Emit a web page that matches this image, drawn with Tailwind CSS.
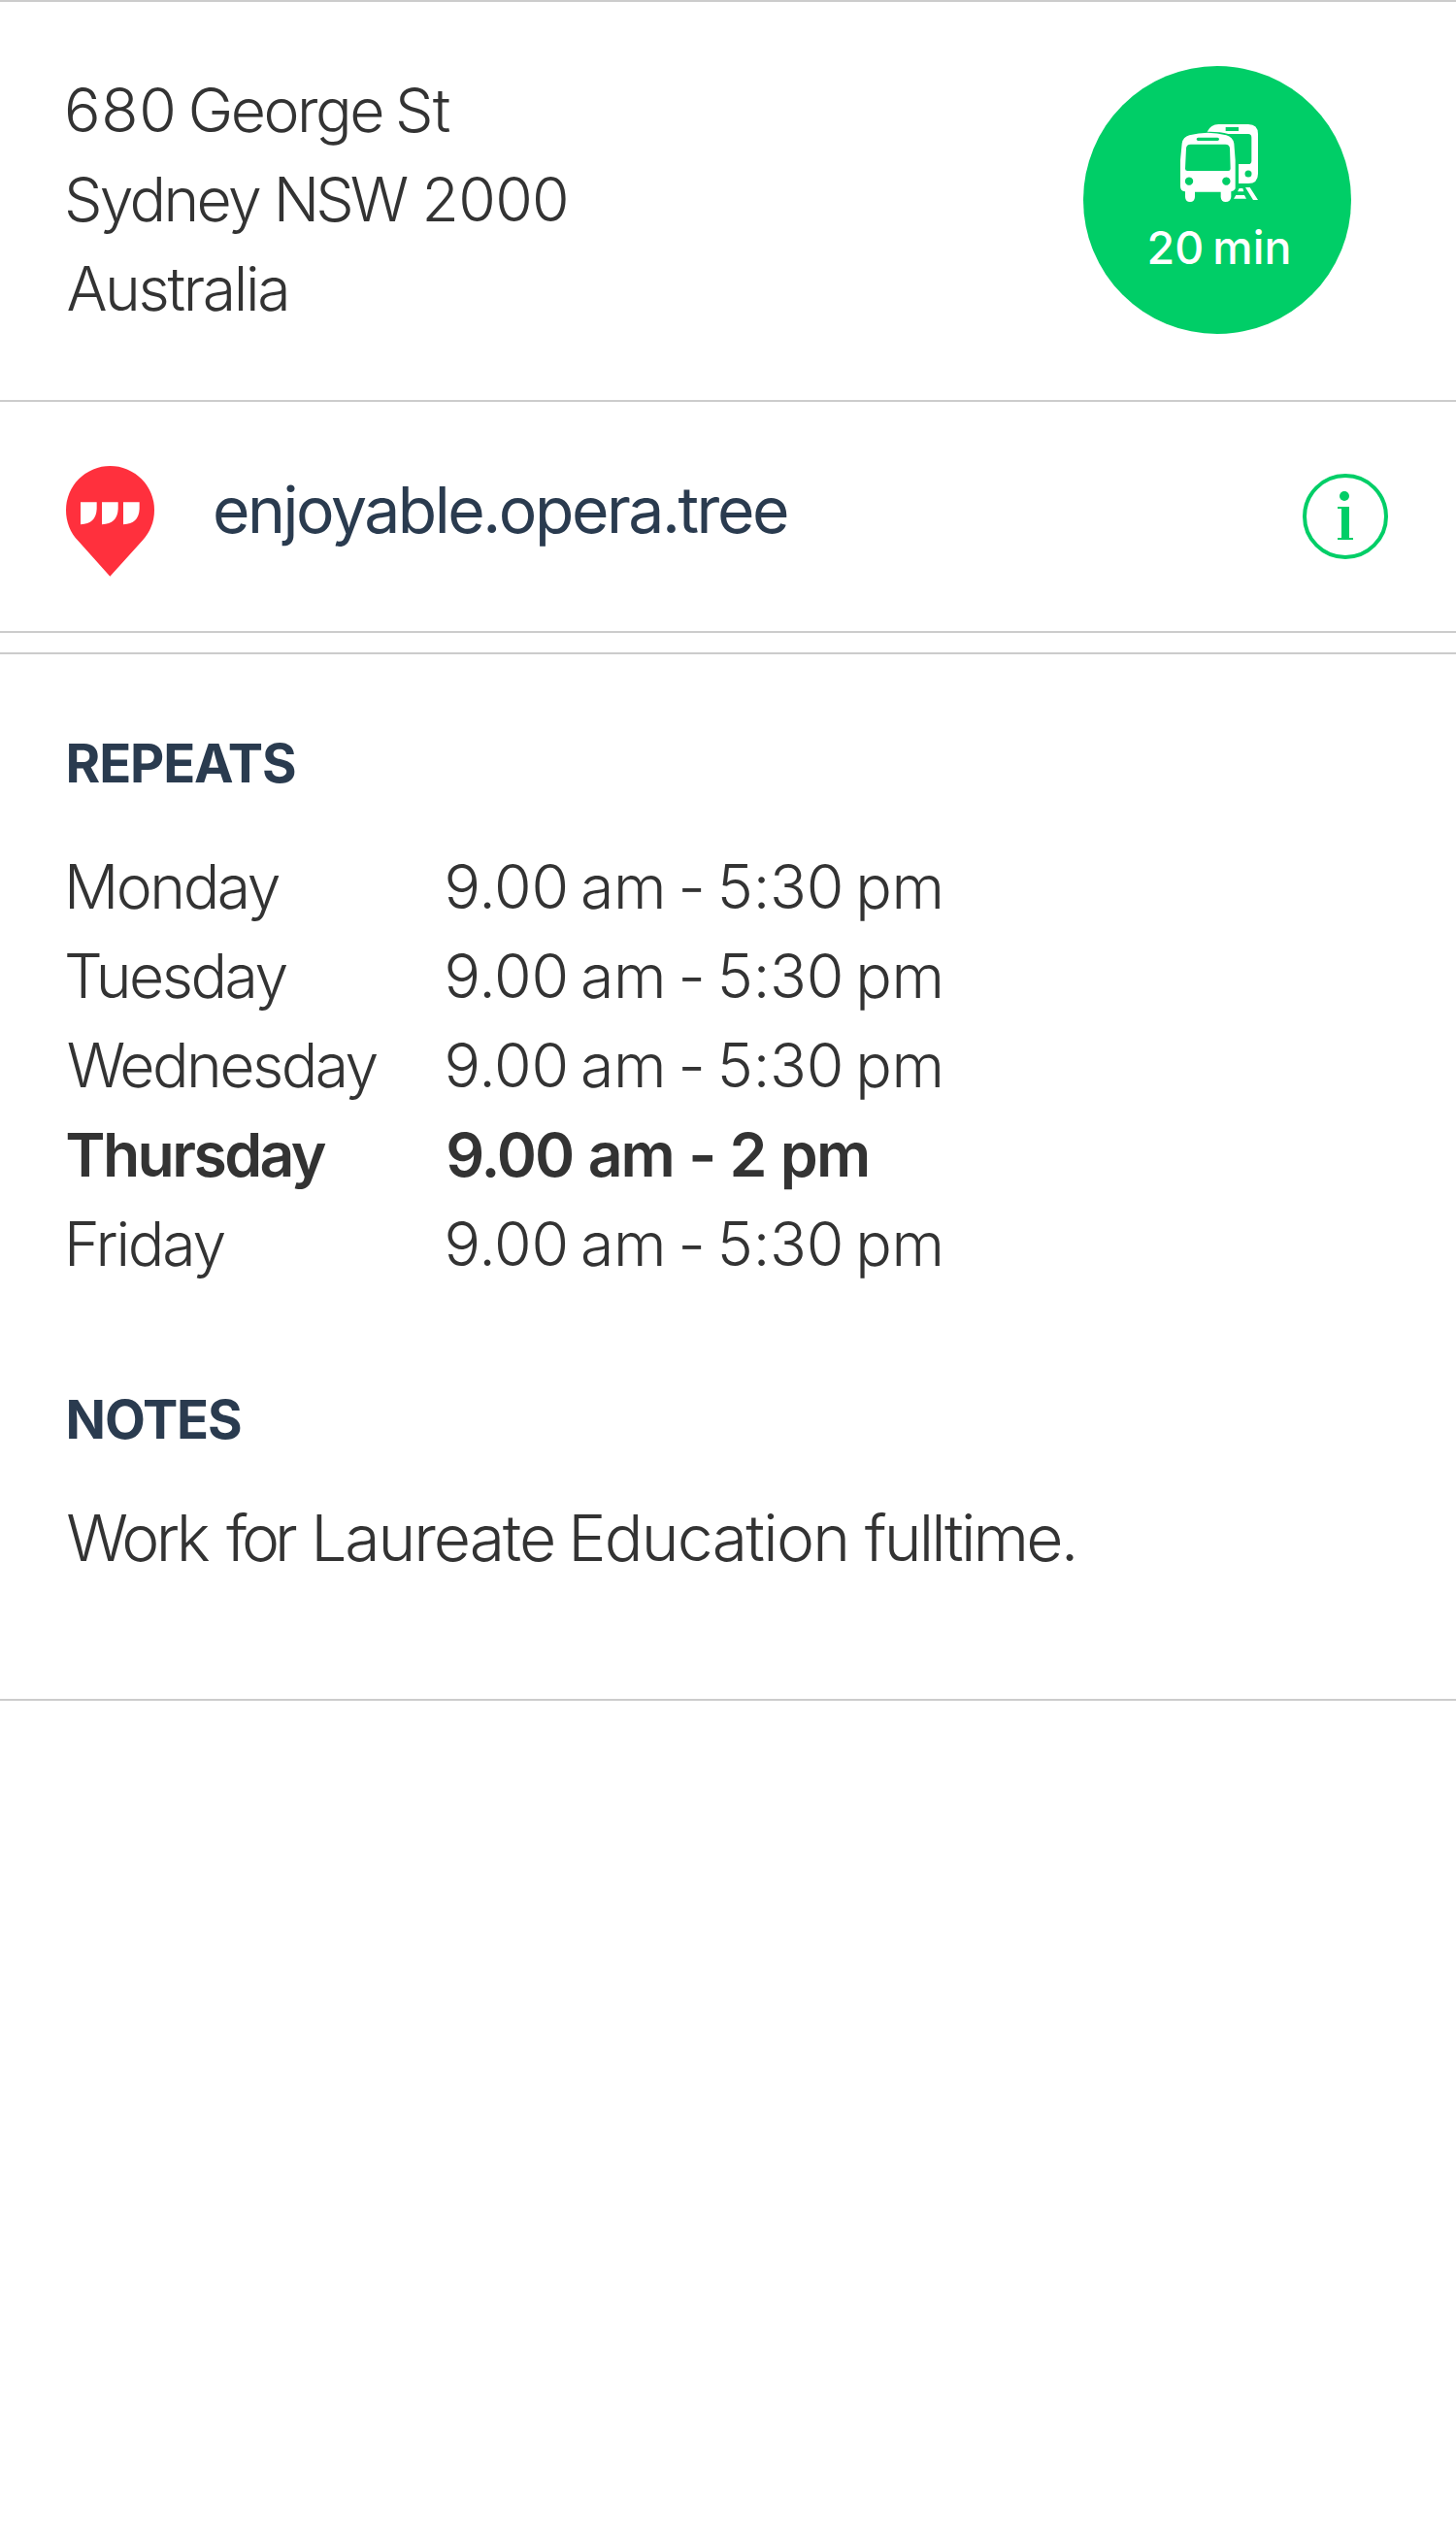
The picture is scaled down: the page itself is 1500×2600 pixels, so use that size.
<!DOCTYPE html>
<html lang="en">
<head>
<meta charset="utf-8">
<title>Place details</title>
<script src="https://cdn.jsdelivr.net/npm/@tailwindcss/browser@4"></script>
</head>
<body class="bg-white font-['Inter',sans-serif] text-[#333] whitespace-nowrap">
<section class="flex h-[412px] items-start justify-between border-t-2 border-[#ccc] pt-[66px] pr-[108px] pl-[66px]">
  <address class="-mt-px text-[62.5px] leading-[92px] font-light not-italic">
    <div class="tracking-[-1.93px] [word-spacing:-2.25px]"><span class="mr-[-2.35px] tracking-[0.72px]">680</span> <span class="mr-[-0.5px] tracking-[-2.43px]">George</span> <span class="tracking-[-0.83px]">St</span></div>
    <div class="tracking-[-2.45px] [word-spacing:-0.43px]"><span class="mr-[0.15px] tracking-[-2.71px]">Sydney</span> <span class="mr-[2.75px] tracking-[-4px]">NSW</span> <span class="tracking-[-0.68px]">2000</span></div>
    <div class="pl-[2.4px] tracking-[-2.36px]">Australia</div>
  </address>
  <div class="flex size-[276px] flex-col items-center rounded-full bg-[#00ce67] pt-[60px] text-white">
    <svg class="ml-1 size-20" viewBox="48 39 240 240" fill="currentColor">
      <path d="M131 62Q142 39 166 39H258Q288 39 288 69V192Q288 222 258 222H228V162H258Q268 162 268 152V80Q268 69 258 69H196Q170 61 131 62Z"/>
      <rect x="188" y="48" width="40" height="12" class="fill-[#00ce67]"/>
      <circle cx="258" cy="192" r="10.5" class="fill-[#00ce67]"/>
      <path fill-rule="evenodd" d="M62 247Q48 245 48 230V150L53 98Q56 79 76 73Q133 58 190 73Q210 79 214 98L218 150V238Q216 244 205 247V264Q203 279 188 279Q174 279 173 264V248H93V264Q92 279 78 279Q64 279 63 264V247ZM80 101Q67 101 66 113L63 176Q63 183 70 183H196Q203 183 203 176L201 113Q200 101 187 101ZM103 80A5 5 0 0 0 103 90H163A5 5 0 0 0 163 80ZM75 202.500A12.500 12.500 0 1 0 75.100 202.500ZM190 202.500A12.500 12.500 0 1 0 190.100 202.500Z"/>
      <path d="M249 234H263L288 273H273ZM230 237H241L244 247H225ZM220 258H246L252 269H213Z"/>
    </svg>
    <span class="mt-[19px] ml-1 text-[46.5px] leading-[56px] font-medium tracking-[0.14px] [word-spacing:-3.65px]">20 min</span>
  </div>
</section>
<section class="flex h-[238px] items-start border-t-2 border-[#ccc] pt-[66px] pr-[70px] pl-[68px]">
  <svg class="h-[114px] w-[91px]" viewBox="54 60 273 341" fill="#ff303d">
    <path d="M190 401L92 291C67 266 54 232 54 196A136.500 136.500 0 0 1 327 196C327 232 314 264 291 289Z"/>
    <path fill="#fff" d="M99 171H149V192Q147 238 99 240ZM165 171H215V192Q213 238 165 240ZM231 171H281V192Q279 238 231 240Z"/>
  </svg>
  <span class="mt-[5px] ml-[60px] text-[66px] leading-[80px] tracking-[-2.46px] text-[#2a3b4f]">enjoyable.opera.tree</span>
  <svg class="mt-2 ml-auto size-[88px]" viewBox="0 0 88 88" fill="#00ce67">
    <circle cx="44" cy="44" r="42" fill="none" stroke="#00ce67" stroke-width="4"/>
    <circle cx="43" cy="23" r="5"/>
    <path d="M36 34H48V66H52V68H36V66H40V36H36Z"/>
  </svg>
</section>
<div class="h-[22px] border-t-2 border-[#ccc]"></div>
<section class="border-y-2 border-[#ccc] pt-[79px] pb-[126px] pl-[66px]">
  <h2 class="pl-[1.6px] text-[54.4px] leading-[66px] font-bold tracking-[-1.13px] text-[#2a3b4f]">REPEATS</h2>
  <dl class="mt-12 grid grid-cols-[391.6px_auto] text-[62.5px] leading-[92px] font-light">
    <dt class="tracking-[-2.48px]">Monday</dt>
    <dd class="tracking-[-0.27px] [word-spacing:-5.07px]">9.00 am <span class="[font-feature-settings:'calt'_0]">-</span> 5:30 pm</dd>
    <dt class="tracking-[-2.49px]">Tuesday</dt>
    <dd class="tracking-[-0.27px] [word-spacing:-5.07px]">9.00 am <span class="[font-feature-settings:'calt'_0]">-</span> 5:30 pm</dd>
    <dt class="pl-[2.7px] tracking-[-2.56px]">Wednesday</dt>
    <dd class="tracking-[-0.27px] [word-spacing:-5.07px]">9.00 am <span class="[font-feature-settings:'calt'_0]">-</span> 5:30 pm</dd>
    <dt class="pl-[1.3px] font-semibold tracking-[-2.61px]">Thursday</dt>
    <dd class="pl-[1.6px] font-semibold tracking-[-1.92px] [word-spacing:1.41px]">9.00 am <span class="[font-feature-settings:'calt'_0]">-</span> 2 pm</dd>
    <dt class="tracking-[-2.18px]">Friday</dt>
    <dd class="tracking-[-0.27px] [word-spacing:-5.07px]">9.00 am <span class="[font-feature-settings:'calt'_0]">-</span> 5:30 pm</dd>
  </dl>
  <h2 class="mt-[102px] pl-[1.6px] text-[54.4px] leading-[66px] font-bold tracking-[-1.15px] text-[#2a3b4f]">NOTES</h2>
  <p class="mt-[49px] pl-[2.3px] text-[66px] leading-[80px] font-light tracking-[-2.17px] [word-spacing:-1.72px]"><span class="mr-[5.2px] tracking-[-3.5px]">Work</span> <span class="mr-[3.85px] tracking-[-5.12px]">for</span> <span class="mr-[-0.7px] tracking-[-2.07px]">Laureate</span> <span class="mr-[1.65px] tracking-[-1.72px]">Education</span> <span class="tracking-[-2.83px]">fulltime.</span></p>
</section>
</body>
</html>
